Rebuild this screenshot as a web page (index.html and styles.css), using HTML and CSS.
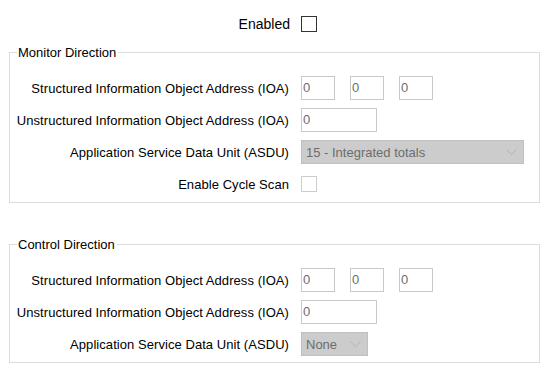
FILE: index.html
```html
<!DOCTYPE html>
<html>
<head>
<meta charset="utf-8">
<link rel="stylesheet" href="styles.css">
</head>
<body>
<div class="top-row">
  <span class="label big">Enabled</span>
  <span class="checkbox dark"></span>
</div>

<fieldset class="group monitor">
  <legend>Monitor Direction</legend>
  <div class="form">
    <span class="label">Structured Information Object Address (IOA)</span>
    <div class="triple">
      <input class="field small" type="text" value="0" disabled>
      <input class="field small" type="text" value="0" disabled>
      <input class="field small" type="text" value="0" disabled>
    </div>
    <span class="label">Unstructured Information Object Address (IOA)</span>
    <div><input class="field medium" type="text" value="0" disabled></div>
    <span class="label">Application Service Data Unit (ASDU)</span>
    <div><div class="combo wide"><span>15 - Integrated totals</span><svg class="chev" width="11" height="6" viewBox="0 0 11 6"><path d="M0.5 0.5 L5.5 5.5 L10.5 0.5" fill="none" stroke="#b4b4b4" stroke-width="1"/></svg></div></div>
    <span class="label">Enable Cycle Scan</span>
    <div><span class="checkbox light"></span></div>
  </div>
</fieldset>

<fieldset class="group control">
  <legend>Control Direction</legend>
  <div class="form">
    <span class="label">Structured Information Object Address (IOA)</span>
    <div class="triple">
      <input class="field small" type="text" value="0" disabled>
      <input class="field small" type="text" value="0" disabled>
      <input class="field small" type="text" value="0" disabled>
    </div>
    <span class="label">Unstructured Information Object Address (IOA)</span>
    <div><input class="field medium" type="text" value="0" disabled></div>
    <span class="label">Application Service Data Unit (ASDU)</span>
    <div><div class="combo narrow"><span>None</span><svg class="chev" width="11" height="6" viewBox="0 0 11 6"><path d="M0.5 0.5 L5.5 5.5 L10.5 0.5" fill="none" stroke="#b4b4b4" stroke-width="1"/></svg></div></div>
  </div>
</fieldset>
</body>
</html>
```

FILE: styles.css
```css
html, body {
  margin: 0;
  padding: 0;
  background: #ffffff;
}
body {
  font-family: "Liberation Sans", Arial, sans-serif;
  font-size: 13px;
  color: #000000;
  width: 549px;
  height: 371px;
  overflow: hidden;
  padding-top: 12px;
  box-sizing: border-box;
}
.top-row {
  display: grid;
  grid-template-columns: 290px auto;
  column-gap: 11px;
  align-items: center;
  height: 24px;
}
.label {
  text-align: right;
  white-space: nowrap;
  line-height: 15px;
  letter-spacing: 0.06px;
}
.label.big {
  font-size: 14px;
  letter-spacing: 0;
}
.checkbox {
  display: block;
  width: 16px;
  height: 16px;
  box-sizing: border-box;
  background: #ffffff;
}
.checkbox.dark {
  border: 1px solid #333333;
}
.checkbox.light {
  border: 1px solid #cccccc;
}
.group {
  margin: 9px 9px 0 9px;
  padding: 0;
  border: 1px solid #dcdcdc;
  min-width: 0;
}
.group.control {
  margin-top: 34px;
}
.group legend {
  margin-left: 7px;
  padding: 0 2px 0 1px;
  line-height: 15px;
  height: 15px;
  color: #000000;
}
.form {
  display: grid;
  grid-template-columns: 279px auto;
  column-gap: 12px;
  row-gap: 8px;
  grid-auto-rows: 24px;
  align-items: center;
  padding: 16px 0 6px 0;
}
.triple {
  display: flex;
  gap: 15px;
}
.field {
  display: block;
  box-sizing: border-box;
  height: 24px;
  margin: 0;
  padding: 3px 1px 4px 1px;
  border: 1px solid #c8c8c8;
  background: #ffffff;
  font-family: "Liberation Sans", Arial, sans-serif;
  font-size: 13px;
  line-height: 15px;
  color: #6d6d6d;
  -webkit-text-fill-color: #6d6d6d;
  outline: none;
  appearance: none;
}
.field.small {
  width: 34px;
}
.field.medium {
  width: 76px;
}
.combo {
  display: flex;
  align-items: center;
  justify-content: space-between;
  box-sizing: border-box;
  height: 24px;
  padding: 0 6px 0 4px;
  border: 1px solid #c0c0c0;
  background: #cccccc;
  color: #6d6d6d;
  line-height: 15px;
}
.combo.wide {
  width: 223px;
}
.combo.narrow {
  width: 67px;
}
.chev {
  display: block;
  flex: none;
}
```
